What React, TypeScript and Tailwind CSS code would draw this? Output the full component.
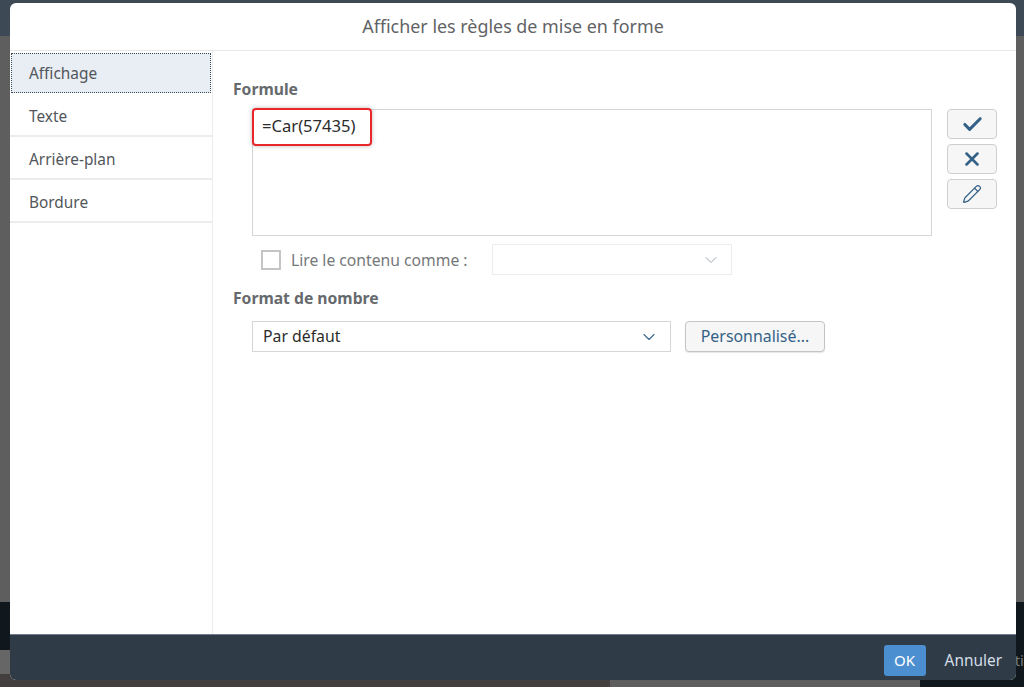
import { Check, ChevronDown, Pencil, X } from "lucide-react";

const font = "font-['Noto_Sans',sans-serif]";

const tabs = ["Affichage", "Texte", "Arrière-plan", "Bordure"];

function IconButton({ children }: { children: React.ReactNode }) {
  return (
    <button className="flex h-[30px] w-[50px] items-center justify-center rounded-[4px] border border-[#cfcfcf] bg-[#f6f6f6] text-[#346187]">
      {children}
    </button>
  );
}

export default function App() {
  return (
    <div className={`relative h-[687px] w-[1024px] overflow-hidden bg-[#5c5c5c] ${font}`}>
      {/* page behind the dialog */}
      <div className="flex h-full flex-col">
        <div className="h-[36px] bg-[#3d4a56]" />
        <div className="h-[566px] bg-[#5e5e5e]" />
        <div className="flex h-[85px]">
          <div className="flex w-[920px] flex-col">
            <div className="h-[48px] bg-[#10181d]" />
            <div className="h-[24px] bg-[#666666]" />
            <div className="flex flex-1">
              <div className="w-[610px] bg-[#423f3e]" />
              <div className="flex-1 bg-[#5e5e5e]" />
            </div>
          </div>
          <div className="flex flex-1 justify-end overflow-hidden bg-[#10181d]">
            <span className="mt-[48px] text-[15px] leading-[20px] text-[#77797b]">ti</span>
          </div>
        </div>
      </div>

      {/* dialog */}
      <div className="absolute left-[10px] top-[3px] flex h-[677px] w-[1006px] flex-col overflow-hidden rounded-[6px] bg-white">
        <div className="flex h-[48px] shrink-0 items-center justify-center border-b border-[#e8e8e8] text-[17.9px] text-[#5f6365]">
          Afficher les règles de mise en forme
        </div>

        <div className="flex min-h-0 flex-1">
          <nav className="w-[203px] shrink-0 border-r border-[#ececec] pt-[2px]">
            {tabs.map((tab, i) => (
              <div
                key={tab}
                className={
                  i === 0
                    ? "mx-[1px] mb-[1px] flex h-[40px] items-center bg-[#e9edf4] pl-[18px] pt-[2px] text-[15.4px] text-[#51565a] outline-1 outline-dotted outline-[#3c4a58] -outline-offset-1"
                    : "flex h-[43px] items-center border-b-2 border-[#ececec] pl-[19px] pt-[4px] text-[15.4px] text-[#51565a]"
                }
              >
                {tab}
              </div>
            ))}
          </nav>

          <div className="flex-1 pl-[20px] pt-[28px]">
            <div className="text-[15.7px] font-bold leading-[20px] text-[#666a6d]">Formule</div>

            <div className="mt-[10px] flex">
              <div className="relative ml-[19px] h-[127px] w-[680px] border border-[#d6d6d6] bg-white">
                <div className="absolute left-[-1px] top-[-2px] flex h-[38px] w-[120px] items-center rounded-[4px] border-2 border-[#e8262b] pb-[1px] pl-[8px] text-[16.6px] text-[#2c2c2c] shadow-[0_0_4px_rgba(120,120,120,0.5)]">
                  =Car(57435)
                </div>
              </div>
              <div className="ml-[15px] flex flex-col gap-[5px]">
                <IconButton>
                  <Check size={23} strokeWidth={3.2} />
                </IconButton>
                <IconButton>
                  <X size={22} strokeWidth={2.8} />
                </IconButton>
                <IconButton>
                  <Pencil size={20} strokeWidth={1.5} />
                </IconButton>
              </div>
            </div>

            <div className="mt-[8px] flex items-center">
              <div className="ml-[28px] h-[20px] w-[20px] border-2 border-[#c4c4c4] bg-white" />
              <span className="ml-[10px] w-[201px] pt-[2px] text-[15.7px] text-[#75787a]">Lire le contenu comme :</span>
              <div className="flex h-[31px] w-[240px] items-center justify-end border border-[#ececec] pr-[10px] text-[#9eaab5]">
                <ChevronDown size={20} strokeWidth={1.2} />
              </div>
            </div>

            <div className="mt-[13px] text-[15.7px] font-bold leading-[20px] text-[#666a6d]">Format de nombre</div>

            <div className="mt-[13px] flex">
              <div className="ml-[19px] flex h-[31px] w-[419px] items-center justify-between border border-[#d6d6d6] pl-[10px] pr-[11px] text-[15.8px] text-[#2c2c2c]">
                Par défaut
                <ChevronDown size={20} strokeWidth={1.4} className="text-[#3f6a8e]" />
              </div>
              <button className="ml-[14px] h-[31px] w-[140px] rounded-[4px] border border-[#c4c4c4] bg-[#f6f6f6] text-[15.9px] text-[#346187] shadow-[0_1px_1px_rgba(0,0,0,0.1)]">
                Personnalisé...
              </button>
            </div>
          </div>
        </div>

        <div className="flex h-[46px] shrink-0 items-center justify-end border-t border-[#6d7d8b] bg-[#2f3c48] pr-[14px]">
          <button className="mt-[6px] h-[31px] w-[42px] rounded-[3px] bg-[#4b8fd0] text-[15px] text-white">OK</button>
          <span className="ml-[19px] mt-[6px] text-[15.4px] text-[#d5dfe8]">Annuler</span>
        </div>
      </div>
    </div>
  );
}
